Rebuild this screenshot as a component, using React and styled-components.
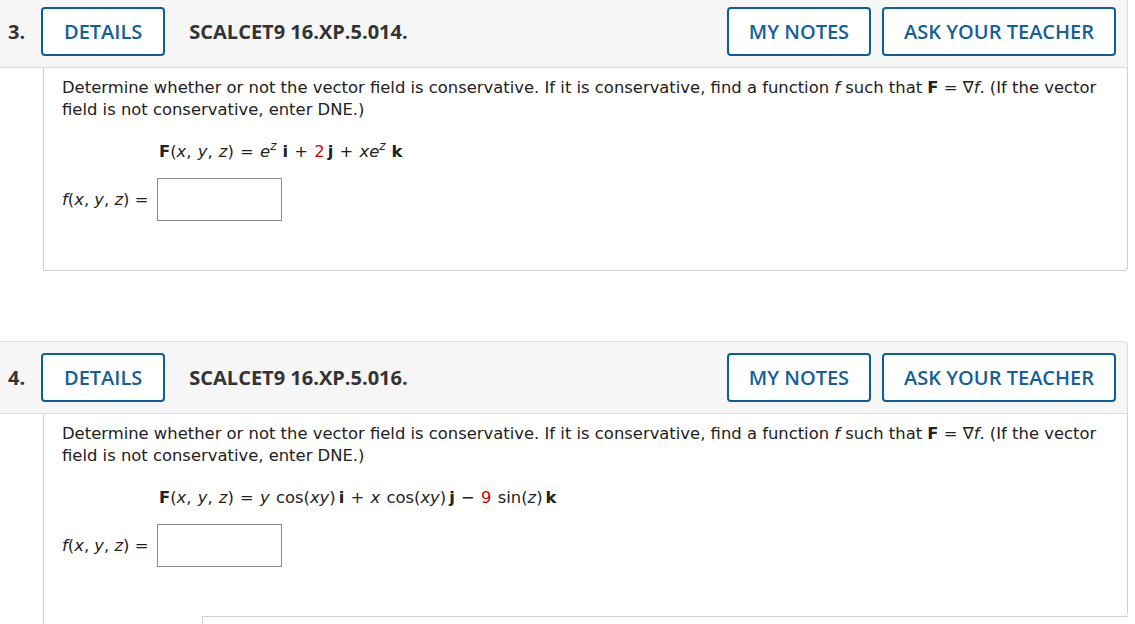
import React from 'react';
import styled, { createGlobalStyle } from 'styled-components';

const GlobalStyle = createGlobalStyle`
  body {
    margin: 0;
    background: #fff;
    font-family: "Open Sans", "Liberation Sans", sans-serif;
    color: #333;
  }
`;

const questions = [
  {
    number: 3,
    code: 'SCALCET9 16.XP.5.014.',
    field: (
      <>
        <b>F</b>(<i>x</i>, <i>y</i>, <i>z</i>) = <i>e</i>
        <Sup>z</Sup>
        <Vec>i</Vec> + <Coef>2</Coef>
        <Vec>j</Vec> + <i>xe</i>
        <Sup>z</Sup>
        <Vec>k</Vec>
      </>
    ),
  },
  {
    number: 4,
    code: 'SCALCET9 16.XP.5.016.',
    open: true,
    field: (
      <>
        <b>F</b>(<i>x</i>, <i>y</i>, <i>z</i>) = <i>y</i> cos(<i>xy</i>)
        <Vec>i</Vec> + <i>x</i> cos(<i>xy</i>)
        <Vec>j</Vec> − <Coef>9</Coef> sin(<i>z</i>)
        <Vec>k</Vec>
      </>
    ),
  },
];

function Sup({ children }) {
  return <SupText>{children}</SupText>;
}

function Vec({ children }) {
  return <VecText>{children}</VecText>;
}

function Coef({ children }) {
  return <CoefText>{children}</CoefText>;
}

const Question = ({ number, code, field, open }) => (
  <Block>
    <Header>
      <Number>{number}.</Number>
      <OutlineButton>DETAILS</OutlineButton>
      <Code>{code}</Code>
      <Actions>
        <OutlineButton $wide>MY NOTES</OutlineButton>
        <OutlineButton $wide>ASK YOUR TEACHER</OutlineButton>
      </Actions>
    </Header>

    <Body $open={open}>
      <Prompt>
        Determine whether or not the vector field is conservative. If it is
        conservative, find a function <i>f</i> such that <b>F</b> = ∇<i>f</i>.
        (If the vector field is not conservative, enter DNE.)
      </Prompt>
      <Formula>{field}</Formula>
      <AnswerRow>
        <span>
          <i>f</i>(<i>x</i>, <i>y</i>, <i>z</i>) =
        </span>
        <AnswerInput type="text" />
      </AnswerRow>
    </Body>

    {open && (
      <Tail>
        <TailBox />
      </Tail>
    )}
  </Block>
);

const App = () => (
  <>
    <GlobalStyle />
    <Page>
      {questions.map((q) => (
        <Question key={q.number} {...q} />
      ))}
    </Page>
  </>
);

const Page = styled.div`
  width: 1128px;
  margin-top: -5px;
  display: flex;
  flex-direction: column;
  gap: 70px;
`;

const Block = styled.section`
  display: flex;
  flex-direction: column;
`;

const Header = styled.div`
  height: 73px;
  box-sizing: border-box;
  display: flex;
  align-items: center;
  padding: 0 11px 0 8px;
  background: #f6f6f6;
  border: 1px solid #dcdcdc;
  border-left: none;
  border-top-right-radius: 4px;
`;

const Number = styled.span`
  width: 33px;
  font-size: 20px;
  font-weight: 700;
  color: #333;
`;

const Code = styled.span`
  margin-left: 24px;
  font-size: 20px;
  font-weight: 700;
  color: #333;
`;

const Actions = styled.div`
  margin-left: auto;
  display: flex;
  gap: 11px;
`;

const OutlineButton = styled.button`
  height: 49px;
  padding: 0 ${({ $wide }) => ($wide ? '20px' : '21px')};
  background: #fff;
  border: 2px solid #0b5e99;
  border-radius: 4px;
  font-family: "Open Sans", "Liberation Sans", sans-serif;
  font-size: 20px;
  font-weight: 600;
  color: #155f98;
  cursor: pointer;
`;

const Body = styled.div`
  margin-left: 43px;
  padding: 9px 18px 49px 18px;
  border: 1px solid #cfcfcf;
  border-top: none;
  ${({ $open }) => ($open ? 'border-bottom: none;' : '')}
  border-bottom-right-radius: 4px;
  font-family: "DejaVu Sans", sans-serif;
  font-size: 16.4px;
  line-height: 22px;
  color: #222;
`;

const Prompt = styled.p`
  margin: 0;
`;

const Formula = styled.div`
  margin: 20px 0 0 97px;
  word-spacing: 1px;
`;

const SupText = styled.sup`
  font-style: italic;
  font-size: 12px;
  line-height: 0;
  vertical-align: 7px;
  margin-right: 3px;
`;

const VecText = styled.b`
  margin-left: 3px;
`;

const CoefText = styled.span`
  color: #d40000;
`;

const AnswerRow = styled.div`
  margin-top: 15px;
  display: flex;
  align-items: center;
  gap: 9px;
`;

const AnswerInput = styled.input`
  width: 125px;
  height: 43px;
  box-sizing: border-box;
  border: 1px solid #8a8a8a;
  border-radius: 0;
  background: #fff;
`;

const Tail = styled.div`
  margin-left: 43px;
  height: 20px;
  padding-left: 158px;
  border-left: 1px solid #cfcfcf;
  display: flex;
`;

const TailBox = styled.div`
  flex: 1;
  border-top: 1px solid #cfcfcf;
  border-left: 1px solid #cfcfcf;
`;

export default App;
